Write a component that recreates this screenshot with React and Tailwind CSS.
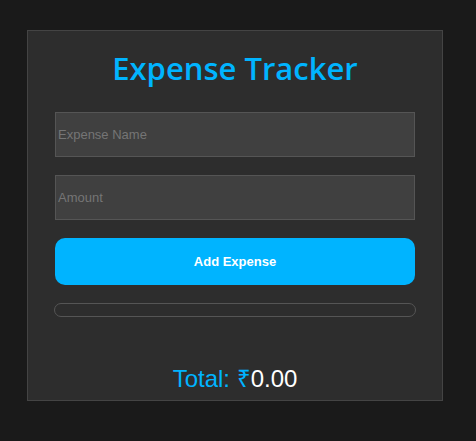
export default function App() {
  return (
    <main className="min-h-screen bg-[#1a1a1a] py-[30px] pr-[33px] pl-[27px] font-['Liberation_Sans',Arial,sans-serif]">
      <section className="flex flex-col border border-[#444] bg-[#2d2d2d] px-[26px] text-center">
        <h1 className="mt-[15px] font-['Open_Sans','Noto_Sans',sans-serif] text-[31px] leading-[44px] font-semibold text-[#00b4ff]">Expense Tracker</h1>
        <form className="mt-[22px] flex flex-col gap-[18px] px-px" onSubmit={(e) => e.preventDefault()}>
          <input type="text" aria-label="Expense Name" placeholder="Expense Name" className="h-[45px] w-full border border-[#555] bg-[#404040] px-0.5 text-[13px] text-white placeholder:text-[#757575]" />
          <input type="number" aria-label="Amount" placeholder="Amount" className="h-[45px] w-full border border-[#555] bg-[#404040] px-0.5 text-[13px] text-white placeholder:text-[#757575]" />
          <button type="submit" className="h-[47px] rounded-[10px] bg-[#00b4ff] text-[13px] font-bold text-white">Add Expense</button>
        </form>
        <ul className="mt-[18px] min-h-[14px] rounded-full border border-[#555]" />
        <p className="mt-[46px] mb-[5px] text-2xl leading-8 text-[#00b4ff]">
          Total: ₹<span className="text-white">0.00</span>
        </p>
      </section>
    </main>
  );
}
